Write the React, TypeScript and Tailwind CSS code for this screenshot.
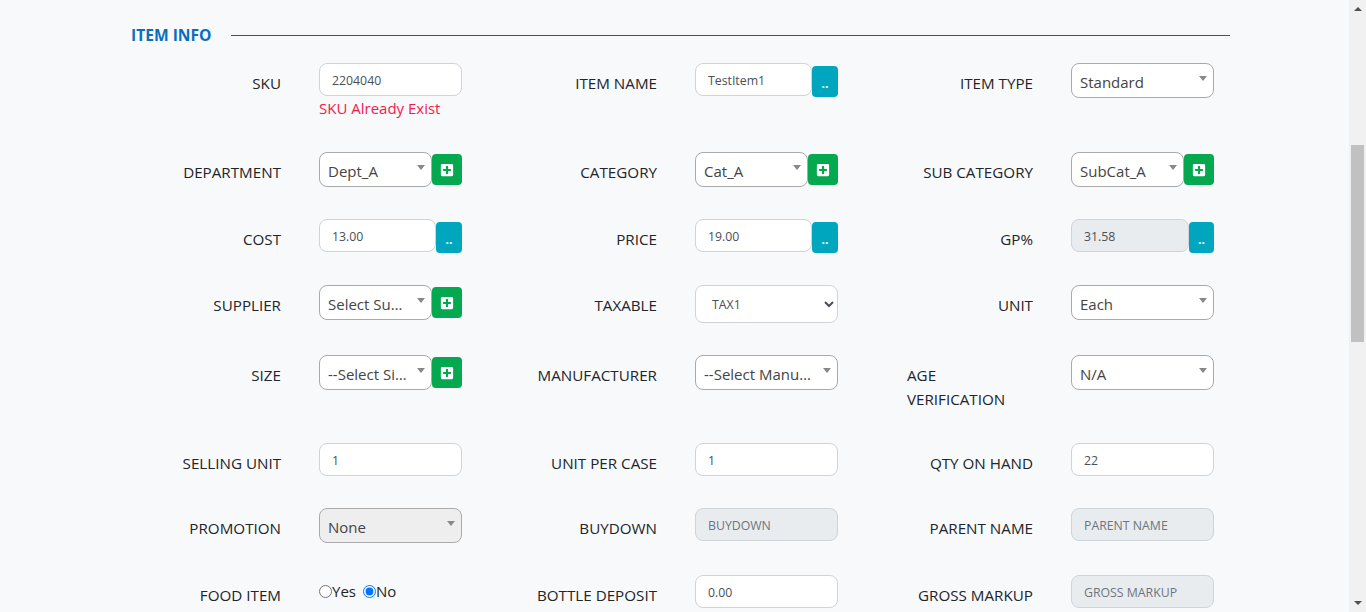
import { ReactNode } from 'react'
import { FaPlusSquare } from 'react-icons/fa'

function Field({ label, children, wrap }: { label: string; children: ReactNode; wrap?: boolean }) {
  return (
    <div className="flex w-[376px] items-start">
      <label className={`mr-[38px] w-[126px] shrink-0 pt-2 text-[15.2px] leading-6 text-[#212529] ${wrap ? 'text-left' : 'text-right whitespace-nowrap'}`}>
        {label}
      </label>
      <div className="w-[143px] shrink-0">{children}</div>
    </div>
  )
}

function TextBox({ value, placeholder, disabled, className = '' }: { value?: string; placeholder?: string; disabled?: boolean; className?: string }) {
  return (
    <input
      readOnly
      disabled={disabled}
      defaultValue={value}
      placeholder={placeholder}
      className={`block h-[33px] min-w-0 rounded-lg border border-[#ced4da] px-3 pt-px text-[12.3px] text-[#495057] outline-none placeholder:text-[#6c757d] ${disabled ? 'bg-[#e9ecef]' : 'bg-white'} ${className || 'w-full'}`}
    />
  )
}

function DropDown({ text, disabled, className = '', textClass = 'pr-5' }: { text: string; disabled?: boolean; className?: string; textClass?: string }) {
  return (
    <div className={`relative h-[35px] rounded-lg border border-[#aaaaaa] pl-2 text-[15px] leading-[35px] text-[#444444] ${disabled ? 'bg-[#eeeeee]' : 'bg-white'} ${className || 'w-full'}`}>
      <span className={`block truncate pt-px ${textClass}`}>{text}</span>
      <span className="absolute right-[6px] top-3 h-0 w-0 border-x-[4.5px] border-t-[5px] border-x-transparent border-t-[#888888]" />
    </div>
  )
}

function PlusButton() {
  return (
    <button className="mt-[2px] flex h-[31px] w-[30px] shrink-0 items-center justify-center rounded bg-[#04a84f] text-[14px] text-white">
      <FaPlusSquare />
    </button>
  )
}

function DotsButton() {
  return (
    <button className="mt-[3px] flex h-[31px] flex-1 items-end justify-center rounded bg-[#00a6bd] pb-[7px] text-[12px] font-bold leading-none text-white">
      ..
    </button>
  )
}

function InputDots({ value, disabled }: { value: string; disabled?: boolean }) {
  return (
    <div className="flex">
      <TextBox value={value} disabled={disabled} className={disabled ? 'w-[118px]' : 'w-[117px]'} />
      <DotsButton />
    </div>
  )
}

function SelectPlus({ text, textClass }: { text: string; textClass?: string }) {
  return (
    <div className="flex">
      <DropDown text={text} className="w-[113px]" textClass={textClass} />
      <PlusButton />
    </div>
  )
}

export default function App() {
  return (
    <div className="flex h-[612px] overflow-hidden bg-[#f8f9fb] font-['Open_Sans',sans-serif]">
      <main className="w-[1349px] shrink-0 pl-[131px]">
        <div className="flex h-[46px] w-[1099px] items-center gap-[19px] pt-6">
          <h2 className="pt-px text-[15.6px] font-bold text-[#0a6ebd]">ITEM INFO</h2>
          <div className="h-px flex-1 bg-[#1a5f93]" />
        </div>

        <div className="ml-6 mt-[17px] flex flex-col">
          <div className="flex h-[89px]">
            <Field label="SKU">
              <TextBox value="2204040" />
              <p className="whitespace-nowrap text-[15px] leading-6 text-[#f21b4b]">SKU Already Exist</p>
            </Field>
            <Field label="ITEM NAME">
              <div className="flex">
                <TextBox value="TestItem1" className="w-[117px]" />
                <DotsButton />
              </div>
            </Field>
            <Field label="ITEM TYPE">
              <DropDown text="Standard" />
            </Field>
          </div>

          <div className="flex h-[67px]">
            <Field label="DEPARTMENT"><SelectPlus text="Dept_A" /></Field>
            <Field label="CATEGORY"><SelectPlus text="Cat_A" /></Field>
            <Field label="SUB CATEGORY"><SelectPlus text="SubCat_A" /></Field>
          </div>

          <div className="flex h-[66px]">
            <Field label="COST"><InputDots value="13.00" /></Field>
            <Field label="PRICE"><InputDots value="19.00" /></Field>
            <Field label="GP%"><InputDots value="31.58" disabled /></Field>
          </div>

          <div className="flex h-[70px]">
            <Field label="SUPPLIER"><SelectPlus text="Select Supplier" /></Field>
            <Field label="TAXABLE">
              <select className="block h-[38px] w-full rounded-lg border border-[#ced4da] bg-white pl-3 text-[12.3px] text-[#495057]">
                <option>TAX1</option>
              </select>
            </Field>
            <Field label="UNIT"><DropDown text="Each" /></Field>
          </div>

          <div className="flex h-[88px]">
            <Field label="SIZE"><SelectPlus text="--Select Size--" textClass="pr-6" /></Field>
            <Field label="MANUFACTURER"><DropDown text="--Select Manufacturer--" textClass="pr-6" /></Field>
            <Field label="AGE VERIFICATION" wrap><DropDown text="N/A" /></Field>
          </div>

          <div className="flex h-[65px]">
            <Field label="SELLING UNIT"><TextBox value="1" /></Field>
            <Field label="UNIT PER CASE"><TextBox value="1" /></Field>
            <Field label="QTY ON HAND"><TextBox value="22" /></Field>
          </div>

          <div className="flex h-[67px]">
            <Field label="PROMOTION"><DropDown text="None" disabled /></Field>
            <Field label="BUYDOWN"><TextBox placeholder="BUYDOWN" disabled /></Field>
            <Field label="PARENT NAME"><TextBox placeholder="PARENT NAME" disabled /></Field>
          </div>

          <div className="flex h-[37px]">
            <Field label="FOOD ITEM">
              <div className="flex items-center pt-[6px] text-[15px] leading-5 text-[#212529]">
                <input type="radio" name="food" />
                <span className="mr-[7px]">Yes</span>
                <input type="radio" name="food" defaultChecked />
                <span>No</span>
              </div>
            </Field>
            <Field label="BOTTLE DEPOSIT"><TextBox value="0.00" /></Field>
            <Field label="GROSS MARKUP"><TextBox placeholder="GROSS MARKUP" disabled /></Field>
          </div>
        </div>
      </main>

      <aside className="flex w-[17px] shrink-0 flex-col items-center bg-[#f1f1f1]">
        <span className="mt-[7px] h-0 w-0 border-x-[4px] border-b-[4px] border-x-transparent border-b-[#505050]" />
        <div className="mt-[134px] h-[197px] w-[13px] bg-[#c1c1c1]" />
        <span className="mt-[259px] h-0 w-0 border-x-[4px] border-t-[4px] border-x-transparent border-t-[#505050]" />
      </aside>
    </div>
  )
}
